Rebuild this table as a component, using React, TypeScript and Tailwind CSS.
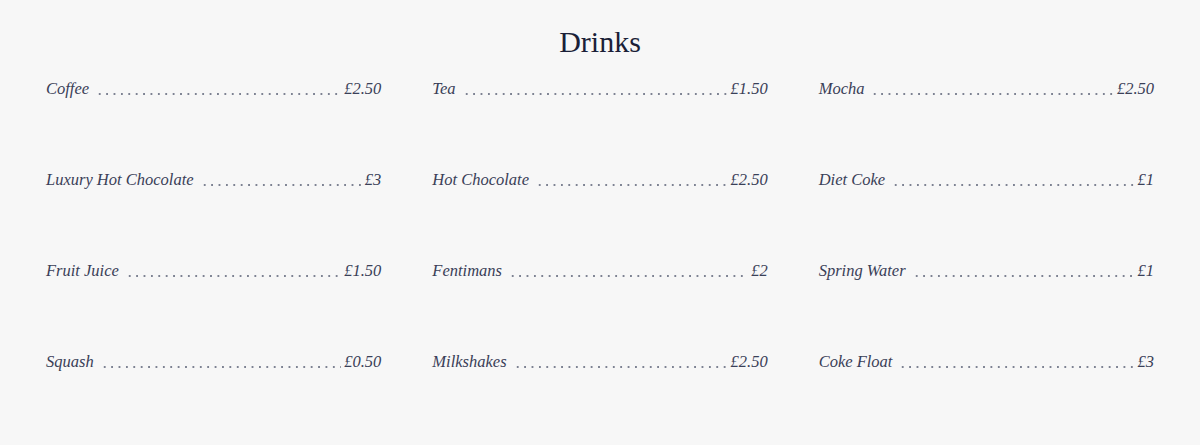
import React from "react";

type Drink = { name: string; price: string };

const drinks: Drink[] = [
  { name: "Coffee", price: "£2.50" },
  { name: "Tea", price: "£1.50" },
  { name: "Mocha", price: "£2.50" },
  { name: "Luxury Hot Chocolate", price: "£3" },
  { name: "Hot Chocolate", price: "£2.50" },
  { name: "Diet Coke", price: "£1" },
  { name: "Fruit Juice", price: "£1.50" },
  { name: "Fentimans", price: "£2" },
  { name: "Spring Water", price: "£1" },
  { name: "Squash", price: "£0.50" },
  { name: "Milkshakes", price: "£2.50" },
  { name: "Coke Float", price: "£3" },
];

const MenuItem: React.FC<{ item: Drink }> = ({ item }) => (
  <div className="flex h-[24px] text-[16.5px] italic text-[#3a4058] leading-[24px]">
    <span className="whitespace-nowrap">{item.name}</span>
    {/* dot leader */}
    <span className="flex-1 ml-[7px] mr-[3px] bg-[radial-gradient(circle,#7d8292_0.75px,transparent_1.15px)] bg-[length:7.4px_2px] bg-[position:0_16px] bg-repeat-x" />
    <span className="whitespace-nowrap">{item.price}</span>
  </div>
);

const App: React.FC = () => {
  return (
    <div
      className="w-full min-h-[445px] bg-[#f7f7f7]"
      style={{ fontFamily: '"Liberation Serif", "DejaVu Serif", serif' }}
    >
      <div className="pt-[24px] px-[46px]">
        <h1 className="text-center text-[30px] leading-[36px] text-[#1b1f38] mb-[17px]">Drinks</h1>
        <div className="grid grid-cols-3 gap-x-[51px] gap-y-[67px]">
          {drinks.map((d, i) => (
            <MenuItem key={i} item={d} />
          ))}
        </div>
      </div>
    </div>
  );
};

export default App;
